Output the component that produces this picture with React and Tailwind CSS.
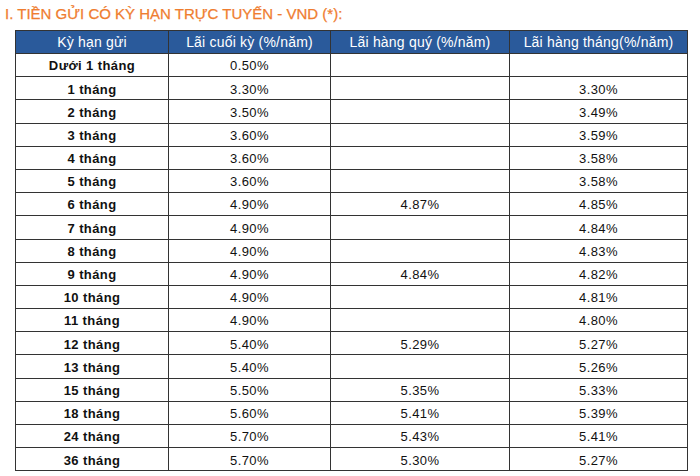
import React from "react";

const rows = [
  ["Dưới 1 tháng", "0.50%", "", ""],
  ["1 tháng", "3.30%", "", "3.30%"],
  ["2 tháng", "3.50%", "", "3.49%"],
  ["3 tháng", "3.60%", "", "3.59%"],
  ["4 tháng", "3.60%", "", "3.58%"],
  ["5 tháng", "3.60%", "", "3.58%"],
  ["6 tháng", "4.90%", "4.87%", "4.85%"],
  ["7 tháng", "4.90%", "", "4.84%"],
  ["8 tháng", "4.90%", "", "4.83%"],
  ["9 tháng", "4.90%", "4.84%", "4.82%"],
  ["10 tháng", "4.90%", "", "4.81%"],
  ["11 tháng", "4.90%", "", "4.80%"],
  ["12 tháng", "5.40%", "5.29%", "5.27%"],
  ["13 tháng", "5.40%", "", "5.26%"],
  ["15 tháng", "5.50%", "5.35%", "5.33%"],
  ["18 tháng", "5.60%", "5.41%", "5.39%"],
  ["24 tháng", "5.70%", "5.43%", "5.41%"],
  ["36 tháng", "5.70%", "5.30%", "5.27%"],
];

export default function App() {
  return (
    <div className="w-[700px] h-[476px] bg-white overflow-hidden font-['Liberation_Sans',Arial,sans-serif]">
      <h2 className="pl-[5px] pt-[5px] h-[30px] text-[15px] leading-[18px] text-[#ef7d30] [-webkit-text-stroke:0.25px_#ef7d30]">
        I. TIỀN GỬI CÓ KỲ HẠN TRỰC TUYẾN - VND (*):
      </h2>
      <table className="ml-[15px] w-[673px] border-collapse text-[13px] text-[#111] tracking-[0.4px]">
        <thead>
          <tr className="h-[23px] bg-[#2a5a9b] text-white text-[14px] tracking-[0.2px]">
            <th className="w-[153px] border border-[#333] font-normal">Kỳ hạn gửi</th>
            <th className="w-[162px] border border-[#333] font-normal">Lãi cuối kỳ (%/năm)</th>
            <th className="w-[179px] border border-[#333] font-normal">Lãi hàng quý (%/năm)</th>
            <th className="border border-[#333] font-normal">Lãi hàng tháng(%/năm)</th>
          </tr>
        </thead>
        <tbody>
          {rows.map((r) => (
            <tr key={r[0]} className="h-[23.2px]">
              <td className="border border-[#333] text-center font-bold p-0 pt-[2px]">{r[0]}</td>
              <td className="border border-[#333] text-center p-0 pt-[2px]">{r[1]}</td>
              <td className="border border-[#333] text-center p-0 pt-[2px]">{r[2]}</td>
              <td className="border border-[#333] text-center p-0 pt-[2px]">{r[3]}</td>
            </tr>
          ))}
        </tbody>
      </table>
    </div>
  );
}
